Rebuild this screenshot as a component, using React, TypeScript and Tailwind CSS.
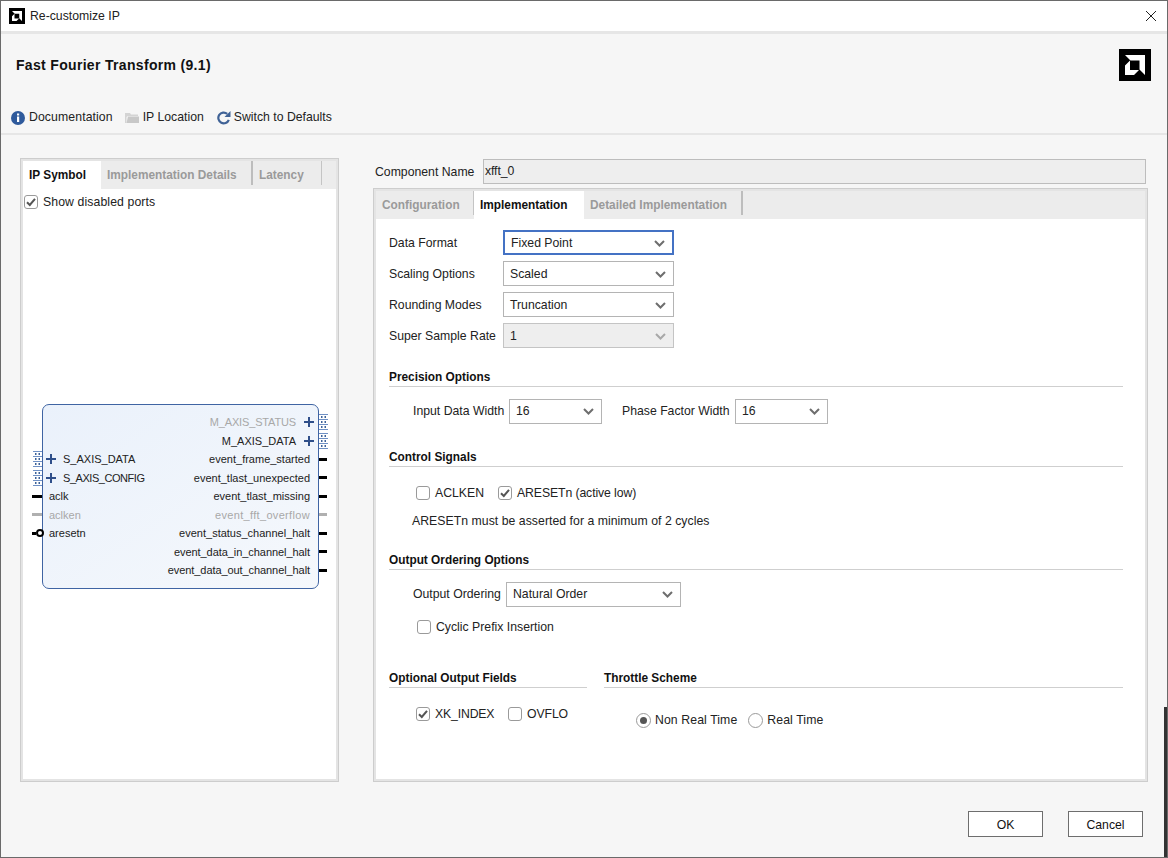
import React from "react";

function AmdLogo({ size }: { size: number }) {
  return (
    <svg width={size} height={size} viewBox="0 0 32 32" className="shrink-0">
      <rect width="32" height="32" fill="#000" />
      <path d="M6 6H26V26L20.5 20.5V11.5H11.5Z" fill="#fff" />
      <path d="M6 16.5L11 11.5V21H20L15 26H6Z" fill="#fff" />
    </svg>
  );
}

function Chevron({ color = "#6e6e6e" }: { color?: string }) {
  return (
    <svg width="11" height="7" viewBox="0 0 11 7">
      <path d="M1 1L5.5 5.5L10 1" fill="none" stroke={color} strokeWidth="2" />
    </svg>
  );
}

function Select({ value, w, focused, disabled, nudge }: { value: string; w: string; focused?: boolean; disabled?: boolean; nudge?: boolean }) {
  return (
    <div
      className={`${w} h-[25px] shrink-0 flex items-center justify-between pl-[6px] pr-[7px] border ${
        focused ? "border-2 border-[#4472c4] pl-[4px] pr-[6px] bg-white" : disabled ? "border-[#c4c4c4] bg-[#eeeeee]" : "border-[#b4b4b4] bg-white"
      } ${nudge ? "pt-[2px]" : ""}`}
    >
      <span className="text-[#222]">{value}</span>
      <Chevron color={disabled ? "#a8a8a8" : "#6e6e6e"} />
    </div>
  );
}

function Checkbox({ checked, label, className = "", labelClass = "" }: { checked?: boolean; label: string; className?: string; labelClass?: string }) {
  return (
    <div className={`flex items-center ${className}`}>
      <div className="w-[14px] h-[14px] rounded-[3px] border border-[#9a9a9a] bg-white flex items-center justify-center shrink-0">
        {checked && (
          <svg width="12" height="12" viewBox="0 0 12 12">
            <path d="M2 6.2L4.8 9L10 2.8" fill="none" stroke="#555" strokeWidth="2" />
          </svg>
        )}
      </div>
      <span className={`ml-[5px] text-[#222] ${labelClass}`}>{label}</span>
    </div>
  );
}

function Radio({ checked, label, labelClass = "" }: { checked?: boolean; label: string; labelClass?: string }) {
  return (
    <div className="flex items-center">
      <div className="w-[15px] h-[15px] rounded-full border border-[#9a9a9a] bg-white flex items-center justify-center shrink-0">
        {checked && <div className="w-[7px] h-[7px] rounded-full bg-[#555]" />}
      </div>
      <span className={`ml-[4px] text-[#222] ${labelClass}`}>{label}</span>
    </div>
  );
}

function Heading({ children, className = "" }: { children: string; className?: string }) {
  return (
    <div className={`h-[18px] border-b border-[#cfcfcf] font-bold text-[11.85px] text-[#111] leading-[17px] ${className}`}>{children}</div>
  );
}

function Tab({ label, active, w, divider }: { label: string; active?: boolean; w: string; divider?: "thick" | "thin" }) {
  return (
    <div className={`${w} h-full relative pl-[6px] pt-[2px] flex items-center font-bold text-[11.85px] ${active ? "bg-white text-[#111]" : "text-[#9a9a9a]"}`}>
      {label}
      {divider && (
        <div className={`absolute right-0 top-0 h-[24px] ${divider === "thick" ? "w-[2px] bg-[#bdbdbd]" : "w-[1px] bg-[#c4c4c4]"}`} />
      )}
    </div>
  );
}

function Bus({ className }: { className: string }) {
  return (
    <svg width="9" height="16" viewBox="0 0 9 16" className={className}>
      <rect x="0" y="0" width="9" height="16" fill="#fff" />
      <path d="M0 0.5H9M0 5.5H9M0 10.5H9M0 15.5H9" stroke="#6f90c4" />
      <path d="M2 3H3.5M5.5 3H7M2 8H3.5M5.5 8H7M2 13H3.5M5.5 13H7" stroke="#3d6299" strokeWidth="2" />
    </svg>
  );
}

function Plus({ className = "" }: { className?: string }) {
  return (
    <svg width="10" height="10" viewBox="0 0 10 10" className={className}>
      <path d="M0 5H10M5 0V10" stroke="#2f4f8a" strokeWidth="2" />
    </svg>
  );
}

type Row = { left?: string; leftKind?: string; leftClass?: string; right?: string; rightKind?: string; rightClass?: string };

const rows: Row[] = [
  { right: "M_AXIS_STATUS", rightKind: "busDim", rightClass: "tracking-[-0.15px]" },
  { right: "M_AXIS_DATA", rightKind: "bus" },
  { left: "S_AXIS_DATA", leftKind: "bus", right: "event_frame_started", rightKind: "wire" },
  { left: "S_AXIS_CONFIG", leftKind: "bus", leftClass: "tracking-[-0.45px]", right: "event_tlast_unexpected", rightKind: "wire" },
  { left: "aclk", leftKind: "wire", right: "event_tlast_missing", rightKind: "wire" },
  { left: "aclken", leftKind: "dim", right: "event_fft_overflow", rightKind: "dim", rightClass: "tracking-[0.33px]" },
  { left: "aresetn", leftKind: "neg", right: "event_status_channel_halt", rightKind: "wire" },
  { right: "event_data_in_channel_halt", rightKind: "wire", rightClass: "tracking-[-0.06px]" },
  { right: "event_data_out_channel_halt", rightKind: "wire", rightClass: "tracking-[-0.08px]" },
];

function SymbolRow({ left, leftKind, leftClass = "", right, rightKind, rightClass = "" }: Row) {
  const isLeftBus = leftKind === "bus";
  const isRightBus = rightKind === "bus" || rightKind === "busDim";
  return (
    <div className="h-[18.5px] relative flex items-center justify-between text-[11px]">
      <div className={`flex items-center ${isLeftBus ? "pl-[3px]" : "pl-[6px]"} ${leftKind === "dim" ? "text-[#a8a8a8]" : "text-[#222]"} ${leftClass}`}>
        {isLeftBus && <Plus className="mr-[7px]" />}
        {left}
      </div>
      <div className={`flex items-center ${isRightBus ? "pr-[4px]" : "pr-[8px]"} ${rightKind === "dim" || rightKind === "busDim" ? "text-[#a8a8a8]" : "text-[#222]"} ${rightClass}`}>
        {right}
        {isRightBus && <Plus className="ml-[8px]" />}
      </div>
      {isLeftBus && <Bus className="absolute left-[-10px] top-[1px]" />}
      {leftKind === "wire" && <div className="absolute left-[-11px] w-[10px] h-[3px] bg-black" />}
      {leftKind === "dim" && <div className="absolute left-[-11px] w-[10px] h-[3px] bg-[#b0b0b0]" />}
      {leftKind === "neg" && (
        <>
          <div className="absolute left-[-11px] w-[4px] h-[3px] bg-black" />
          <div className="absolute left-[-7px] w-[8px] h-[8px] rounded-full border-2 border-black bg-white" />
        </>
      )}
      {isRightBus && <Bus className="absolute right-[-10px] top-[1px]" />}
      {rightKind === "wire" && <div className="absolute right-[-9px] w-[8px] h-[3px] bg-black" />}
      {rightKind === "dim" && <div className="absolute right-[-9px] w-[8px] h-[3px] bg-[#b0b0b0]" />}
    </div>
  );
}

export default function App() {
  return (
    <div className="w-[1168px] h-[858px] relative overflow-hidden flex flex-col bg-[#f6f6f6] border border-[#6a6a6a] text-[12.25px] text-[#222] font-['Liberation_Sans',Arial,sans-serif]">
      {/* Title bar */}
      <div className="h-[33px] shrink-0 bg-white border-b-[3px] border-[#e6e6e6] flex items-center pl-[8px] pr-[10px]">
        <AmdLogo size={16} />
        <span className="ml-[5px] text-[#222]">Re-customize IP</span>
        <svg width="12" height="12" viewBox="0 0 12 12" className="ml-auto">
          <path d="M1 1L11 11M11 1L1 11" stroke="#222" strokeWidth="1" />
        </svg>
      </div>

      {/* Heading */}
      <div className="h-[66px] shrink-0 flex items-center justify-between pl-[15px] pr-[16px] pb-[4px]">
        <span className="font-bold text-[14px] tracking-[0.32px] text-[#111]">Fast Fourier Transform (9.1)</span>
        <AmdLogo size={32} />
      </div>

      {/* Toolbar */}
      <div className="h-[35px] shrink-0 border-b-2 border-[#e6e6e6] pl-[10px] pt-[2px] flex items-center">
        <svg width="14" height="14" viewBox="0 0 14 14" className="shrink-0">
          <circle cx="7" cy="7" r="7" fill="#2f5a9c" />
          <rect x="6" y="2.5" width="2.2" height="2" fill="#fff" />
          <rect x="6" y="5.5" width="2.2" height="5.5" fill="#fff" />
        </svg>
        <span className="ml-[4px] tracking-[0.1px]">Documentation</span>
        <svg width="14" height="12" viewBox="0 0 14 12" className="ml-[12px] shrink-0">
          <path d="M0 1H5L6 2.5H13V4H3L1.5 5V11H0Z" fill="#d4d4d4" />
          <path d="M1.5 11L3 4.5H14V11Z" fill="#c8c8c8" />
        </svg>
        <span className="ml-[4px]">IP Location</span>
        <svg width="15" height="15" viewBox="0 0 15 15" className="ml-[12px] shrink-0">
          <path d="M11.2 3.8A5.4 5.4 0 1 0 12.8 9.8" fill="none" stroke="#3f6296" strokeWidth="2.2" />
          <path d="M14.5 1V7H8.5Z" fill="#3f6296" />
        </svg>
        <span className="ml-[3px]">Switch to Defaults</span>
      </div>

      {/* Main */}
      <div className="flex pl-[19px] pt-[23px]">
        {/* Left panel */}
        <div className="w-[319px] h-[624px] shrink-0 border border-[#cdcdcd]">
          <div className="h-full border-2 border-[#e4e4e4] bg-white flex flex-col">
            <div className="h-[28px] shrink-0 bg-[#ececec] flex">
              <Tab label="IP Symbol" active w="w-[78px]" />
              <Tab label="Implementation Details" w="w-[152px]" divider="thick" />
              <Tab label="Latency" w="w-[69px]" divider="thin" />
            </div>
            <Checkbox checked label="Show disabled ports" labelClass="tracking-[0.1px]" className="ml-[1px] mt-[4px] h-[18px]" />
            <div className="w-[277px] h-[185px] ml-[19px] mt-[193px] border border-[#3f64a3] rounded-[7px] bg-gradient-to-br from-[#eaf1fb] to-[#f5f8fc] pt-[8px]">
              {rows.map((r, i) => (
                <SymbolRow key={i} {...r} />
              ))}
            </div>
          </div>
        </div>

        {/* Right column */}
        <div className="w-[775px] ml-[34px] shrink-0 flex flex-col">
          <div className="h-[30px] flex items-start pl-[2px]">
            <span className="mt-[5px] h-[18px] w-[102px]">Component Name</span>
            <div className="ml-[6px] mt-[1px] w-[663px] h-[25px] bg-[#eeeeee] border border-[#bdbdbd] pl-[1px] flex items-center tracking-[-0.1px]">xfft_0</div>
          </div>
          <div className="h-[594px] border border-[#cdcdcd]">
            <div className="h-full border-2 border-[#e4e4e4] bg-white">
              <div className="h-[28px] bg-[#ececec] flex">
                <Tab label="Configuration" w="w-[97px]" />
                <div className="w-[1px] h-[24px] bg-[#c4c4c4]" />
                <Tab label="Implementation" active w="w-[110px]" />
                <Tab label="Detailed Implementation" w="w-[159px]" divider="thick" />
              </div>

              <div className="pl-[13px] pr-[22px]">
                {/* Top form */}
                <div className="pt-[11px] flex flex-col gap-[6px]">
                  <div className="flex items-center">
                    <span className="w-[114px] pt-[2px]">Data Format</span>
                    <Select value="Fixed Point" w="w-[171px]" focused nudge />
                  </div>
                  <div className="flex items-center">
                    <span className="w-[114px] pt-[2px]">Scaling Options</span>
                    <Select value="Scaled" w="w-[171px]" nudge />
                  </div>
                  <div className="flex items-center">
                    <span className="w-[114px] pt-[2px]">Rounding Modes</span>
                    <Select value="Truncation" w="w-[171px]" nudge />
                  </div>
                  <div className="flex items-center">
                    <span className="w-[114px] pt-[2px]">Super Sample Rate</span>
                    <Select value="1" w="w-[171px]" disabled nudge />
                  </div>
                </div>

                <Heading className="mt-[21px]">Precision Options</Heading>
                <div className="mt-[12px] pl-[24px] flex items-center">
                  <span className="w-[96px]">Input Data Width</span>
                  <Select value="16" w="w-[93px]" />
                  <span className="ml-[20px] w-[113px]">Phase Factor Width</span>
                  <Select value="16" w="w-[93px]" />
                </div>

                <Heading className="mt-[25px]">Control Signals</Heading>
                <div className="mt-[14px] pl-[27px] flex items-center h-[24px]">
                  <Checkbox label="ACLKEN" className="w-[82px]" />
                  <Checkbox checked label="ARESETn (active low)" labelClass="tracking-[-0.1px]" />
                </div>
                <div className="mt-[8px] pl-[23px] leading-[16px] tracking-[0.04px]">ARESETn must be asserted for a minimum of 2 cycles</div>

                <Heading className="mt-[23px]">Output Ordering Options</Heading>
                <div className="mt-[12px] pl-[24px] flex items-center">
                  <span className="w-[93px]">Output Ordering</span>
                  <Select value="Natural Order" w="w-[175px]" />
                </div>
                <Checkbox label="Cyclic Prefix Insertion" className="mt-[11px] ml-[28px] h-[18px]" />

                <div className="mt-[34px] flex">
                  <div className="w-[198px] shrink-0">
                    <Heading>Optional Output Fields</Heading>
                    <div className="mt-[17px] pl-[27px] flex items-center h-[18px]">
                      <Checkbox checked label="XK_INDEX" className="w-[92px]" labelClass="tracking-[-0.15px]" />
                      <Checkbox label="OVFLO" labelClass="tracking-[-0.1px]" />
                    </div>
                  </div>
                  <div className="ml-[17px] flex-1">
                    <Heading>Throttle Scheme</Heading>
                    <div className="mt-[23px] pl-[32px] flex items-center h-[18px] gap-[11px]">
                      <Radio checked label="Non Real Time" labelClass="tracking-[0.1px]" />
                      <Radio label="Real Time" labelClass="tracking-[0.1px]" />
                    </div>
                  </div>
                </div>
              </div>
            </div>
          </div>
        </div>
      </div>

      {/* Footer */}
      <div className="flex justify-end gap-[25px] pr-[24px] mt-[29px]">
        <div className="w-[75px] h-[26px] border border-[#6e6e6e] bg-white pt-[2px] flex items-center justify-center text-[#111]">OK</div>
        <div className="w-[75px] h-[26px] border border-[#6e6e6e] bg-white pt-[2px] flex items-center justify-center text-[#111]">Cancel</div>
      </div>

      {/* Sliver of the window behind the dialog */}
      <div className="absolute right-[-1px] bottom-0 w-[4px] h-[150px] bg-[#333333]" />
    </div>
  );
}
